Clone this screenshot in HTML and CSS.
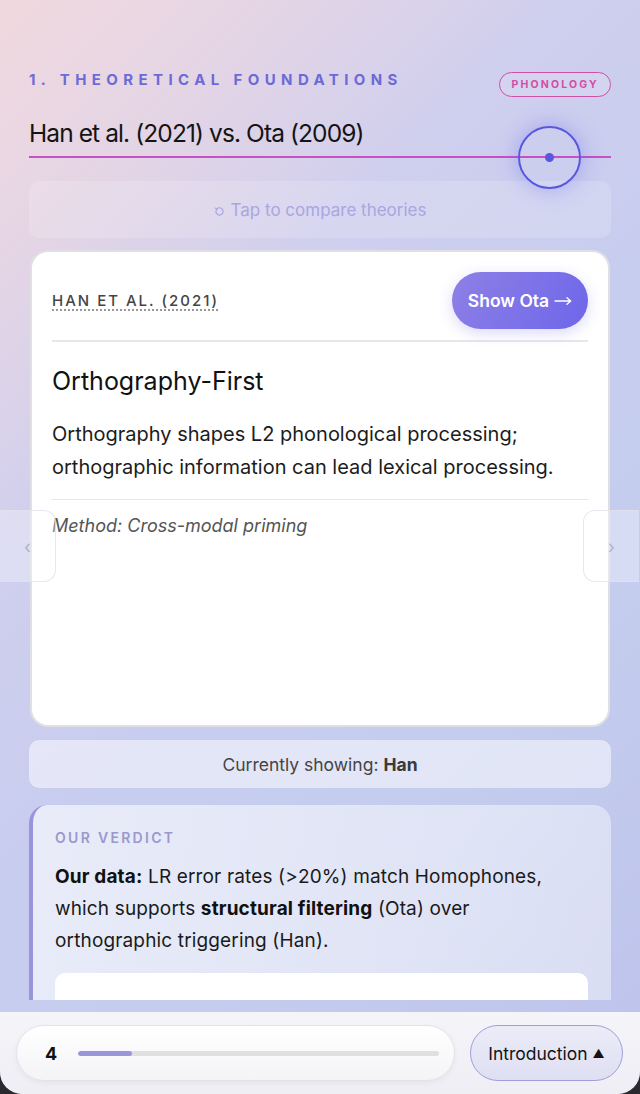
FILE: index.html
```html
<!DOCTYPE html>
<html lang="en">
<head>
<meta charset="utf-8">
<title>Theoretical Foundations</title>
<link rel="stylesheet" href="styles.css">
</head>
<body>
<div class="app">
  <main class="scroll">
    <header class="section-head">
      <div class="head-row">
        <span class="eyebrow">1. Theoretical Foundations</span>
        <span class="pill">Phonology</span>
      </div>
      <div class="title-wrap">
        <h1 class="title">Han et al. (2021) vs. Ota (2009)</h1>
        <div class="rule"></div>
        <div class="scrubber"><span class="scrubber-dot"></span></div>
      </div>
    </header>

    <div class="hint">
      <svg class="hint-icon" viewBox="0 0 12 12" width="11" height="11" aria-hidden="true">
        <path d="M3 3.2 A4 4 0 1 1 2 6.5" fill="none" stroke="currentColor" stroke-width="1.3" stroke-linecap="round"/>
        <path d="M1.2 2.2 L3.3 3.4 L2.2 5.4" fill="none" stroke="currentColor" stroke-width="1.3" stroke-linecap="round" stroke-linejoin="round"/>
      </svg>
      <span>Tap to compare theories</span>
    </div>

    <section class="card">
      <div class="card-head">
        <span class="cite">Han et al. (2021)</span>
        <button class="swap-btn"><span>Show Ota</span><svg class="arrow" viewBox="0 0 18 10" width="18" height="10" aria-hidden="true"><path d="M1 5 H16.5 M13 1.8 L16.7 5 L13 8.2" fill="none" stroke="currentColor" stroke-width="1.4" stroke-linecap="round" stroke-linejoin="round"/></svg></button>
      </div>
      <h2 class="card-title">Orthography-First</h2>
      <p class="card-body">Orthography shapes L2 phonological processing; orthographic information can lead lexical processing.</p>
      <p class="card-method">Method: Cross-modal priming</p>
    </section>

    <div class="status"><span>Currently showing:</span><strong>Han</strong></div>

    <section class="verdict">
      <div class="verdict-label">Our Verdict</div>
      <p class="verdict-body"><strong>Our data:</strong> LR error rates (&gt;20%) match Homophones, which supports <strong>structural filtering</strong> (Ota) over orthographic triggering (Han).</p>
      <div class="verdict-inner"></div>
    </section>
  </main>

  <footer class="footer">
    <div class="progress">
      <span class="progress-num">4</span>
      <div class="track"><div class="track-fill" style="width: 15%"></div></div>
    </div>
    <button class="section-btn">Introduction <span class="caret">▲</span></button>
  </footer>

  <button class="side-nav side-left" aria-label="Previous">‹</button>
  <button class="side-nav side-right" aria-label="Next">›</button>
</div>
</body>
</html>
```

FILE: styles.css
```css
* { box-sizing: border-box; }

html, body {
  margin: 0;
  padding: 0;
  background: #2a2a2e;
}

body {
  font-family: Inter, "Noto Sans", "Liberation Sans", sans-serif;
  color: #111;
}

.app {
  position: relative;
  width: 640px;
  height: 1094px;
  overflow: hidden;
  display: flex;
  flex-direction: column;
  border-radius: 0 0 22px 22px;
  background: linear-gradient(135deg, #f1d9de 0%, #e4d5e5 16%, #d0cfee 32%, #c8cdef 50%, #c4cdee 70%, #bdc2eb 100%);
}

.scroll {
  height: 1000px;
  flex: none;
  overflow: hidden;
  padding: 70px 29px 0 29px;
}

/* Header */
.head-row {
  display: flex;
  justify-content: space-between;
  align-items: flex-start;
}

.eyebrow {
  font-size: 15px;
  line-height: 20px;
  font-weight: 700;
  letter-spacing: 5.4px;
  text-transform: uppercase;
  color: #6c6ad6;
}

.pill {
  margin-top: 2px;
  height: 25px;
  padding: 0 11px;
  display: inline-flex;
  align-items: center;
  border: 1.5px solid #d24fa6;
  border-radius: 13px;
  font-size: 10.5px;
  font-weight: 700;
  letter-spacing: 2.2px;
  text-transform: uppercase;
  color: #d24fa6;
  background: rgba(255, 255, 255, 0.12);
}

.title-wrap {
  position: relative;
  margin-top: 21px;
}

.title {
  margin: 0;
  font-size: 24.5px;
  line-height: 30px;
  font-weight: 400;
  letter-spacing: -0.9px;
  color: #141414;
}

.rule {
  margin-top: 8px;
  height: 2px;
  background: #c84fc6;
}

.scrubber {
  position: absolute;
  left: 489px;
  top: 8px;
  width: 63px;
  height: 63px;
  border: 2.5px solid #5858df;
  border-radius: 50%;
  box-shadow: 0 0 22px rgba(96, 96, 240, 0.4);
  display: flex;
  align-items: center;
  justify-content: center;
}

.scrubber-dot {
  width: 9px;
  height: 9px;
  border-radius: 50%;
  background: #5858df;
}

/* Hint */
.hint {
  margin-top: 23px;
  height: 57px;
  border-radius: 10px;
  background: rgba(255, 255, 255, 0.16);
  display: flex;
  align-items: center;
  justify-content: center;
  gap: 6px;
  font-size: 17px;
  color: #aaa6e0;
}

.hint-icon { margin-top: 3px; }

/* Card */
.card {
  margin: 12px 1px 0 1px;
  height: 477px;
  background: #fff;
  border: 2px solid #dfdfe4;
  border-radius: 18px;
  padding: 20px 20px 0 20px;
}

.card-head {
  display: flex;
  justify-content: space-between;
  align-items: center;
  padding-bottom: 11px;
  border-bottom: 2px solid #e7e7ea;
}

.cite {
  font-size: 15px;
  letter-spacing: 2px;
  text-transform: uppercase;
  color: #444;
  font-weight: 500;
  text-decoration: underline dotted #777;
  text-underline-offset: 4px;
}

.swap-btn {
  width: 136px;
  height: 57px;
  border: none;
  border-radius: 29px;
  background: linear-gradient(120deg, #8e80e6 0%, #6e66ea 100%);
  color: #fff;
  font-family: inherit;
  font-size: 17.5px;
  font-weight: 600;
  box-shadow: 0 4px 14px rgba(110, 100, 230, 0.25);
  display: flex;
  align-items: center;
  justify-content: center;
  gap: 5px;
  padding: 0;
}

.arrow { margin-top: 1px; }

.card-title {
  margin: 24px 0 0 0;
  font-size: 25px;
  line-height: 30px;
  font-weight: 400;
  color: #111;
}

.card-body {
  margin: 22px 0 0 0;
  font-size: 20px;
  line-height: 33px;
  color: #1c1c1c;
  padding-bottom: 15px;
  border-bottom: 1px solid #e6e6e9;
}

.card-method {
  margin: 14px 0 0 0;
  font-size: 18px;
  line-height: 24px;
  font-style: italic;
  color: #555;
}

/* Status */
.status {
  margin-top: 13px;
  height: 48px;
  border-radius: 10px;
  background: rgba(255, 255, 255, 0.5);
  display: flex;
  align-items: center;
  justify-content: center;
  gap: 5px;
  font-size: 17.5px;
  color: #444;
}

.status strong { font-weight: 700; color: #3a3a3a; }

/* Verdict */
.verdict {
  margin-top: 17px;
  border-radius: 18px;
  border-left: 4px solid #9a94dc;
  background: linear-gradient(100deg, rgba(255,255,255,0.6) 0%, rgba(240,242,250,0.55) 100%);
  padding: 24px 23px 0 22px;
  height: 220px;
}

.verdict-label {
  font-size: 14px;
  line-height: 18px;
  font-weight: 600;
  letter-spacing: 2.3px;
  text-transform: uppercase;
  color: #9a98cc;
}

.verdict-body {
  margin: 14px 0 0 0;
  font-size: 19px;
  line-height: 32px;
  letter-spacing: 0.15px;
  color: #1a1a1a;
}

.verdict-body strong { font-weight: 700; color: #111; }

.verdict-inner {
  margin-top: 16px;
  height: 80px;
  border-radius: 10px;
  background: #fff;
}

/* Footer */
.footer {
  margin-top: 12px;
  flex: 1;
  display: flex;
  gap: 15px;
  padding: 13px 17px 0 16px;
  background: linear-gradient(180deg, #f4f4f9 0%, #eeeef4 100%);
  border-radius: 0 0 22px 22px;
}

.progress {
  flex: 1;
  height: 56px;
  border-radius: 28px;
  background: linear-gradient(180deg, #ffffff 0%, #f4f4f7 100%);
  border: 1px solid #e2e2e8;
  box-shadow: 0 2px 6px rgba(0, 0, 0, 0.05);
  display: flex;
  align-items: center;
  padding: 0 15px 0 28px;
  gap: 21px;
}

.progress-num {
  font-size: 18px;
  font-weight: 700;
  color: #111;
}

.track {
  flex: 1;
  height: 5px;
  border-radius: 3px;
  background: #e0e0e3;
  overflow: hidden;
}

.track-fill {
  height: 100%;
  border-radius: 3px;
  background: #9b96da;
}

.section-btn {
  width: 153px;
  height: 56px;
  border-radius: 28px;
  border: 1.5px solid #a09ddb;
  background: linear-gradient(180deg, #ececf8 0%, #dedff2 100%);
  font-family: inherit;
  font-size: 17.5px;
  color: #141414;
  padding: 0;
}

.caret {
  font-size: 12px;
  vertical-align: 2px;
}

/* Side navigation overlays */
.side-nav {
  position: absolute;
  top: 510px;
  width: 56px;
  height: 72px;
  border-radius: 12px;
  border: 1px solid rgba(225, 225, 235, 0.8);
  background: rgba(255, 255, 255, 0.3);
  color: #b4b4be;
  font-family: inherit;
  font-size: 18px;
  padding: 0;
  display: flex;
  align-items: center;
  justify-content: center;
}

.side-left { left: 0; border-left: none; border-radius: 0 12px 12px 0; }
.side-right { left: 583px; border-right: none; border-radius: 12px 0 0 12px; }
```
